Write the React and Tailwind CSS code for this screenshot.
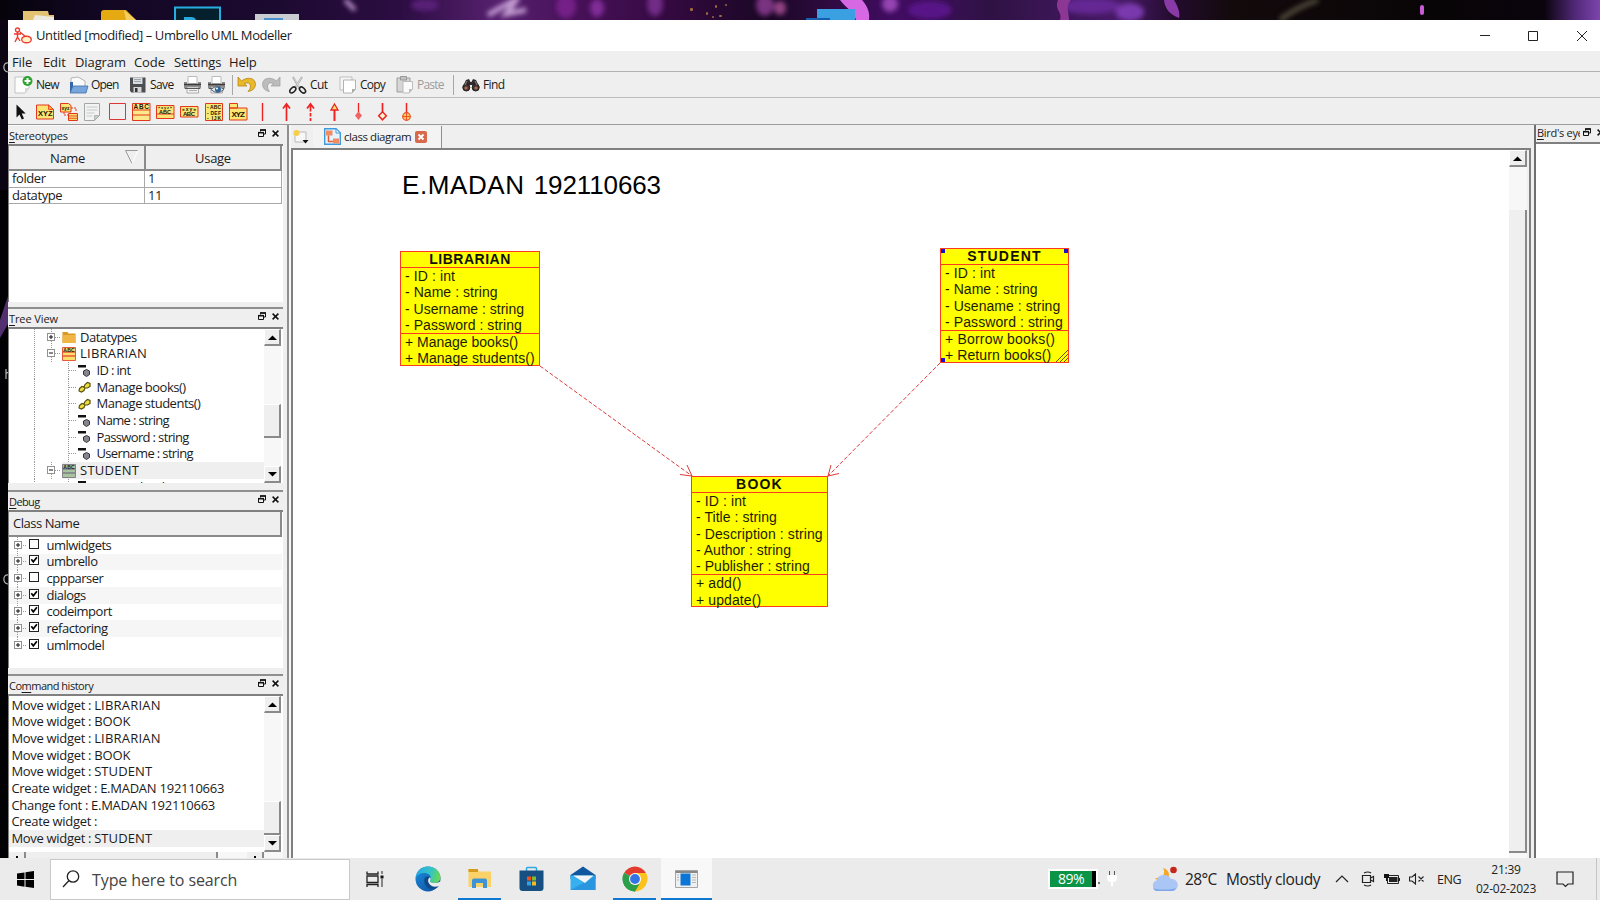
import React from "react";

/* ---------- desktop backdrop ---------- */

function Wallpaper() {
  return (
    <svg width="1600" height="20" viewBox="0 0 1600 20" className="block shrink-0">
      <defs>
        <linearGradient id="wall" x1="0" x2="1" y1="0" y2="0">
          <stop offset="0" stopColor="#06030b" />
          <stop offset="0.06" stopColor="#120722" />
          <stop offset="0.17" stopColor="#1c0a30" />
          <stop offset="0.25" stopColor="#2c0d42" />
          <stop offset="0.31" stopColor="#56206e" />
          <stop offset="0.36" stopColor="#481159" />
          <stop offset="0.42" stopColor="#33093f" />
          <stop offset="0.48" stopColor="#1a0724" />
          <stop offset="0.51" stopColor="#2a0a3a" />
          <stop offset="0.56" stopColor="#420c63" />
          <stop offset="0.62" stopColor="#2f1244" />
          <stop offset="0.7" stopColor="#491a68" />
          <stop offset="0.735" stopColor="#220b2c" />
          <stop offset="0.77" stopColor="#130a0c" />
          <stop offset="0.9" stopColor="#080506" />
          <stop offset="0.965" stopColor="#0a040d" />
          <stop offset="0.985" stopColor="#53297a" />
          <stop offset="1" stopColor="#7d45ad" />
        </linearGradient>
        <filter id="soft" filterUnits="userSpaceOnUse" x="300" y="-20" width="1100" height="60">
          <feGaussianBlur stdDeviation="2.500" />
        </filter>
      </defs>
      <rect width="1600" height="20" fill="url(#wall)" />
      <g filter="url(#soft)" opacity="0.85">
        <path d="M345 0l10 10" stroke="#e5b5f5" strokeWidth="4" />
        <path d="M488 15l30-17-12 16 20-4" stroke="#d8b5e6" strokeWidth="5" fill="none" />
        <ellipse cx="425" cy="5" rx="14" ry="6" fill="#5f217f" />
        <ellipse cx="566" cy="6" rx="10" ry="12" fill="#7d2490" />
        <ellipse cx="597" cy="8" rx="7" ry="9" fill="#8b32a4" />
        <ellipse cx="655" cy="4" rx="8" ry="12" fill="#7c3193" />
        <ellipse cx="765" cy="5" rx="9" ry="11" fill="#8a3b91" />
        <ellipse cx="780" cy="8" rx="6" ry="7" fill="#a84d96" />
        <ellipse cx="890" cy="4" rx="8" ry="8" fill="#a44fc0" />
        <ellipse cx="930" cy="10" rx="22" ry="9" fill="#5d1690" />
        <ellipse cx="1090" cy="6" rx="30" ry="8" fill="#6b2a9d" />
        <ellipse cx="1130" cy="12" rx="14" ry="9" fill="#8440bb" />
        <path d="M1280 20c10-8 20-14 38-20" stroke="#5d5745" strokeWidth="5" fill="none" />
      </g>
      <path d="M840 0h22c6 7 8 13 7 20h-13c-2-8-8-10-16-20z" fill="#d768e4" />
      <path d="M1058 0h13c-6 6-2 12-2 20h-9c3-8-6-10-2-20z" fill="#8d3795" />
      <path d="M1164 0h10c5 8 6 14 5 18-8-3-14-8-15-18z" fill="#8a3aa6" />
      <rect x="1420" y="5" width="4" height="10" rx="2" fill="#c65bd4" />
      <g fill="#b9813e" opacity="0.8">
        <rect x="690" y="8" width="3" height="3" rx="1" /><rect x="706" y="12" width="2" height="3" rx="1" />
        <rect x="715" y="5" width="2" height="3" rx="1" /><rect x="719" y="15" width="3" height="2" rx="1" />
        <rect x="712" y="16" width="2" height="2" rx="1" /><rect x="725" y="4" width="2" height="2" rx="1" />
      </g>
      <path d="M23 11h25l1 4h5v5H23z" fill="#e4c273" /><path d="M35 15l19 2v3H33z" fill="#ece9df" />
      <path d="M101 20v-7q0-3 3-3h22l10 10z" fill="#e5a912" /><path d="M124 10l12 10h-10z" fill="#f3cf62" />
      <rect x="175" y="7.500" width="45" height="14" fill="#03202c" stroke="#27aee0" strokeWidth="2" />
      <path d="M184 20v-3h7q4 0 5 3z" fill="#2aa9dc" />
      <rect x="255" y="14" width="44" height="6" fill="#c9cbd0" /><rect x="264" y="18" width="19" height="2" fill="#4a8fd0" />
      <rect x="817" y="9" width="38" height="11" fill="#3aa0e2" /><rect x="806" y="18" width="24" height="2" fill="#155fae" />
    </svg>
  );
}

function DesktopEdge() {
  return (
    <svg width="8" height="838" viewBox="0 0 8 838" className="block shrink-0 bg-[#020104]">
      <rect width="8" height="170" fill="#0b0412" />
      <path d="M8 276L0 300v18l8-14z" fill="#52306f" />
      <g fill="none" stroke="#b9b9b9" strokeWidth="1.200">
        <path d="M8 43c-5-1-6 8 0 9" />
        <path d="M6 349v10M6 354q1-2 2-1" />
        <path d="M8 555c-5-1-6 8 0 9" />
      </g>
    </svg>
  );
}

/* ---------- shared pieces ---------- */

const Icon = ({ w = 18, h = 18, className = "", children }) => (
  <svg width={w} height={h} viewBox={`0 0 ${w} ${h}`} className={`block shrink-0 ${className}`} fill="none">
    {children}
  </svg>
);

const RestoreGlyph = () => (
  <Icon w={8} h={8}>
    <path d="M2.500 2.500V1h5v4H5.500" stroke="#111" />
    <path d="M2 1h6" stroke="#111" strokeWidth="1.600" />
    <path d="M.5 3.500h5v4h-5z" stroke="#111" fill="#efefef" />
    <path d="M0 3.700h6" stroke="#111" strokeWidth="1.600" />
  </Icon>
);

const CrossGlyph = () => (
  <Icon w={7} h={7}>
    <path d="M.6.600l5.800 5.800M6.400.600L.600 6.400" stroke="#111" strokeWidth="1.500" />
  </Icon>
);

function DockTitle({ before = "", hot, rest, tracking = "tracking-[-0.35px]" }) {
  return (
    <div className="flex h-[18px] shrink-0 items-center pl-[1px]">
      <span className={`text-[11px] leading-none ${tracking}`}>
        {before}
        <span className="underline underline-offset-2">{hot}</span>
        {rest}
      </span>
      <span className="mr-[4px] mb-[4px] ml-auto flex items-center gap-[6px]">
        <RestoreGlyph />
        <CrossGlyph />
      </span>
    </div>
  );
}

function ScrollButton({ up }) {
  return (
    <div className="flex h-[17px] w-full shrink-0 items-center justify-center border-r-2 border-b-2 border-t border-l border-[#8a8a8a] border-t-white border-l-white bg-[#efefef]">
      <svg width="9" height="5" viewBox="0 0 9 5" className="block">
        <path d={up ? "M0 5L4.500 .5 9 5z" : "M0 0L4.500 4.500 9 0z"} fill="#000" />
      </svg>
    </div>
  );
}

function ScrollBar({ gap, thumb }) {
  return (
    <div className="flex w-[17px] shrink-0 flex-col bg-[#f7f7f7]">
      <ScrollButton up />
      <div className={`${gap} shrink-0`} />
      <div className={`${thumb} shrink-0 border-t border-r-2 border-b-2 border-[#8a8a8a] border-t-white bg-[#efefef]`} />
      <div className="flex-1" />
      <ScrollButton />
    </div>
  );
}

/* ---------- toolbar icons ---------- */

const NewIcon = () => (
  <Icon w={20}>
    <path d="M1 1h14v11l-4 5H1z" fill="#fdfdfd" stroke="#c3c3c3" />
    <path d="M15 12l-4 5v-5z" fill="#d8d8d8" />
    <circle cx="13.500" cy="5" r="5" fill="#2aa52f" />
    <path d="M13.500 2v6M10.500 5h6" stroke="#fff" strokeWidth="2" />
  </Icon>
);
const OpenIcon = () => (
  <Icon w={20}>
    <path d="M2 2l7-1 7 4v6H2z" fill="#fafafa" stroke="#b4b4b4" />
    <path d="M1 6h3v10H1z" fill="#3467a7" />
    <path d="M4 10h15l-2 7H1z" fill="#77a5dc" stroke="#3e6ea9" strokeWidth=".8" />
  </Icon>
);
const SaveIcon = () => (
  <Icon>
    <path d="M1 1.500h15.500v15H2.500L1 15z" fill="#4b4d50" />
    <path d="M4 1.500h9.500V8H4z" fill="#d9dde0" />
    <path d="M5 3.500h7M5 5.500h7" stroke="#9ca5ab" />
    <path d="M4.500 11h8v5.500h-8z" fill="#d5d5d5" /><path d="M6 12h2.500v4H6z" fill="#333" />
  </Icon>
);
const PrintIcon = ({ eye }) => (
  <Icon w={20}>
    <path d="M5 .5h9v7H5z" fill="#fff" stroke="#bbb" />
    <path d="M1 6h3v2h11V6h3v6.500H1z" fill="#8c8c8c" />
    <path d="M1 8.500h17" stroke="#3c3c3c" strokeWidth="1.500" />
    <path d="M4 11h11.500v6H4z" fill="#f4f4f4" stroke="#999" strokeWidth=".8" />
    <path d="M2 12.500h15" stroke="#555" />
    {eye ? (
      <>
        <path d="M4 13.500q6-6 13 0-7 6-13 0z" fill="#dbe7f2" stroke="#666" />
        <circle cx="11" cy="13.500" r="3" fill="#2f6698" /><circle cx="10" cy="12.500" r="1" fill="#fff" />
      </>
    ) : (
      <path d="M6 14.500h8" stroke="#aaa" />
    )}
  </Icon>
);
const UndoIcon = () => (
  <Icon w={20}>
    <path d="M1 1v9h9L7 7.500q6-2 6.500 2.500.3 3-2.500 5.500 7-1 7.500-7C18.500 1.500 10 .5 4.500 5z" fill="#e9b92c" stroke="#b98510" strokeWidth=".8" />
  </Icon>
);
const RedoIcon = () => (
  <Icon w={20}>
    <path d="M18 1v9H9l3-2.500q-6-2-6.500 2.500-.3 3 2 5.500-6.500-1-7-7C.5 1.500 9 .5 14.500 5z" fill="#bcbcbc" stroke="#a2a2a2" strokeWidth=".8" />
  </Icon>
);
const CutIcon = () => (
  <Icon>
    <path d="M4 1l7 12M13 1L6 12" stroke="#a9a9a9" strokeWidth="2" />
    <path d="M4.500 1.500l6 10M12.500 1.500l-6 10" stroke="#e8e8e8" strokeWidth=".7" />
    <ellipse cx="3.800" cy="14" rx="3.600" ry="2.200" transform="rotate(-45 3.800 14)" stroke="#222" strokeWidth="1.600" />
    <ellipse cx="13.500" cy="14" rx="3.600" ry="2.200" transform="rotate(45 13.500 14)" stroke="#222" strokeWidth="1.600" />
  </Icon>
);
const CopyIcon = () => (
  <Icon>
    <path d="M1 1h12v13H1z" fill="#f6f6f6" stroke="#bdbdbd" />
    <path d="M4.500 4H16.500v9l-3.500 4H4.500z" fill="#fff" stroke="#b2b2b2" /><path d="M16.500 13l-3.500 4v-4z" fill="#aaa" />
  </Icon>
);
const PasteIcon = () => (
  <Icon>
    <path d="M1 2h13v14H1z" fill="#d6d6d6" stroke="#9d9d9d" /><path d="M4.500.500h6V4h-6z" fill="#c3c3c3" stroke="#999" />
    <path d="M7 5.500h9.500V13l-3.500 4H7z" fill="#fafafa" stroke="#bcbcbc" /><path d="M16.500 13l-3.500 4v-4z" fill="#bbb" />
  </Icon>
);
const FindIcon = () => (
  <Icon>
    <path d="M4 4l3-1 1.500 3h1L11 3l3 1 3.500 7-4 4-3-2V9h-3v4l-3 2-4-4z" fill="#2f2b2b" />
    <circle cx="4.300" cy="11.500" r="3.500" fill="#453330" stroke="#222" /><circle cx="13.700" cy="11.500" r="3.500" fill="#453330" stroke="#222" />
    <circle cx="4" cy="12" r="1.600" fill="#a76f4e" /><circle cx="14" cy="12" r="1.600" fill="#a76f4e" />
    <path d="M5 5l-2 4M13 5l2 4" stroke="#888" />
  </Icon>
);

function ToolButton({ width, icon, label, labelClass = "" }) {
  return (
    <div className={`flex ${width} shrink-0 items-center`}>
      {icon}
      {label && <span className={`text-[12px] leading-none ${labelClass}`}>{label}</span>}
    </div>
  );
}

const Separator = ({ width }) => (
  <div className={`${width} h-[20px] shrink-0`}>
    <div className="h-full w-px bg-[#a8a8a8]" />
  </div>
);

const tiny = { fontFamily: "Liberation Sans, Arial, sans-serif", fontWeight: 700, fill: "#2a1200" };

function ShapeBar() {
  return (
    <div className="flex h-[26px] shrink-0 items-center pt-[2px] pl-[7px]">
      <Icon w={21} h={20}><path d="M1.500 2.500v13l3-3 2.300 5 2.200-1-2.300-5h4z" fill="#111" /></Icon>
      <Icon w={24} h={20}>
        <path d="M.5 3h12l5 4.500v9.500H.500z" fill="#fbe675" stroke="#e5371c" /><path d="M12.500 3v4.500h5z" fill="#ffad43" stroke="#e5371c" strokeWidth=".8" />
        <text x="2" y="14" fontSize="7.500" textLength="14.500" style={tiny}>XYZ</text>
      </Icon>
      <Icon w={24} h={20}>
        <path d="M.5 1.500h8l2.500 2v6.500H.500z" fill="#fbe675" stroke="#e5371c" />
        <text x="1.500" y="8" fontSize="5" textLength="8" style={tiny}>xyz</text>
        <path d="M11 6h5v4M4 10v3h4" stroke="#e5371c" strokeDasharray="2 1" />
        <path d="M8.500 11.500h9v7h-9z" fill="#fbd96b" stroke="#e5371c" /><path d="M8.500 14h9M8.500 16.300h9" stroke="#e5371c" strokeWidth=".8" />
      </Icon>
      <Icon w={24} h={20}>
        <path d="M.5 1.500h15v12l-5 5h-10z" fill="#f3f3f3" stroke="#a5a5a5" /><path d="M15.500 13.500l-5 5v-5z" fill="#c5c9cc" stroke="#a5a5a5" strokeWidth=".7" />
        <path d="M2.500 5h11M2.500 8h11M2.500 11h8M2.500 14h6" stroke="#c4c9cc" />
      </Icon>
      <Icon w={24} h={20}><path d="M1.500 1.500h16v16h-16z" stroke="#df3535" /></Icon>
      <Icon w={24} h={20}>
        <path d="M.5 1.500h17.500v17H.500z" fill="#fbe98a" stroke="#e5371c" /><path d="M.5 8h17.500M.5 13h17.500" stroke="#e5371c" />
        <text x="1.500" y="7.200" fontSize="6.500" textLength="15.500" style={tiny}>ABC</text>
      </Icon>
      <Icon w={24} h={20}>
        <path d="M.5 3.500h17.500v13H.500z" fill="#fbe675" stroke="#e5371c" /><path d="M.5 12h17.500" stroke="#e5371c" />
        <text x="2" y="7" fontSize="4" textLength="14" style={tiny}>«xyz»</text>
        <text x="3" y="11.500" fontSize="5.500" textLength="12" style={tiny}>ABC</text>
      </Icon>
      <Icon w={25} h={20}>
        <path d="M.5 4.500h17.500v10.500H.500z" fill="#fbe675" stroke="#e5371c" />
        <text x="2" y="9" fontSize="5" textLength="14" style={tiny}>«xy»</text>
        <text x="3" y="14" fontSize="6" textLength="12" style={tiny}>ABC</text>
      </Icon>
      <Icon w={24} h={20}>
        <path d="M.5 1.500h17v17H.500z" fill="#f7e873" stroke="#e5371c" />
        <text x="2" y="7" fontSize="5" textLength="14" style={tiny}>- ABC</text>
        <text x="2" y="12.500" fontSize="5" textLength="14" style={tiny}>- DEF</text>
        <text x="2" y="17.500" fontSize="5" textLength="14" style={tiny}>- IJK</text>
      </Icon>
      <Icon w={24} h={20}>
        <path d="M.5 1.500h8v4.500H.500zM.5 6h17.500v12H.500z" fill="#fbe675" stroke="#e5371c" />
        <text x="2.500" y="15" fontSize="8" textLength="13.500" style={tiny}>XYZ</text>
      </Icon>
      <Icon w={24} h={20}><path d="M9.500 1v18" stroke="#ef2222" strokeWidth="1.400" /></Icon>
      <Icon w={24} h={20}><path d="M9.500 2v17M6 6.500L9.500 2 13 6.500" stroke="#ef2222" strokeWidth="1.700" /></Icon>
      <Icon w={24} h={20}><path d="M9.500 6v13" stroke="#ef2222" strokeWidth="1.700" strokeDasharray="3.500 1.500" /><path d="M6 6.500L9.500 2 13 6.500M9.500 2v4" stroke="#ef2222" strokeWidth="1.700" /></Icon>
      <Icon w={24} h={20}><path d="M9.500 8v11" stroke="#ef2222" strokeWidth="2" /><path d="M6 8l3.500-6L13 8z" fill="#fbe675" stroke="#ef2222" strokeWidth="1.300" /></Icon>
      <Icon w={24} h={20}><path d="M9.500 1V11" stroke="#ef2222" strokeWidth="1.300" /><path d="M6 13.500l3.500-4 3.500 4-3.500 4.500z" fill="#ef6464" /></Icon>
      <Icon w={24} h={20}><path d="M9.500 1V10" stroke="#ef2222" strokeWidth="1.700" /><path d="M5.700 13.800l3.800-4 3.800 4-3.800 4z" fill="#fff6d0" stroke="#ef2222" strokeWidth="1.500" /></Icon>
      <Icon w={24} h={20}><path d="M9.500 1V15" stroke="#ef2222" strokeWidth="1.500" /><circle cx="9.500" cy="14.500" r="3.800" fill="#fbc95f" stroke="#ef4a22" strokeWidth="1.200" /><path d="M9.500 11v7M6 14.500h7" stroke="#ef4a22" strokeWidth=".9" /></Icon>
    </div>
  );
}

/* ---------- left docks ---------- */

function Stereotypes() {
  const head = "flex items-center justify-center border-r-2 border-b-2 border-[#8a8a8a] bg-[#efefef] text-[13px] pt-[2px]";
  return (
    <section className="flex h-[182px] shrink-0 flex-col border-t border-[#f8f8f8]">
      <DockTitle hot="S" rest="tereotypes" tracking="tracking-[-0.2px]" />
      <div className="flex h-[158px] flex-col border-t-2 border-l border-[#808080] bg-white">
        <div className="flex h-[25px] w-[273px] shrink-0">
          <div className={`${head} relative w-[137px] pr-[18px]`}>
            <span className="tracking-[-0.3px]">Name</span>
            <svg width="14" height="14" viewBox="0 0 14 14" className="absolute top-[4px] right-[5px]">
              <path d="M13 .500H.500l6.500 13" fill="none" stroke="#999" /><path d="M13 .500L7 13.500" fill="none" stroke="#fff" />
            </svg>
          </div>
          <div className={`${head} flex-1 tracking-[-0.3px]`}>Usage</div>
        </div>
        {[["folder", "1"], ["datatype", "11"]].map(([name, usage]) => (
          <div key={name} className="flex h-[16.5px] w-[273px] shrink-0 items-center border-b border-[#a9a9a9] text-[13px] leading-none tracking-[-0.4px]">
            <span className="flex h-full w-[136px] items-center border-r border-[#a9a9a9] pl-[3px]">{name}</span>
            <span className="flex h-full flex-1 items-center border-r border-[#a9a9a9] pl-[3px]">{usage}</span>
          </div>
        ))}
      </div>
    </section>
  );
}

const dots = { stroke: "#9a9a9a", strokeDasharray: "1 1" };

const ExpandBox = ({ x, plus }) => (
  <g>
    <rect x={x} y="4.500" width="7" height="7" fill="#fff" stroke="#929292" />
    <path d={plus ? `M${x + 1.500} 8h4M${x + 3.500} 6v4` : `M${x + 1.500} 8h4`} stroke="#111" />
  </g>
);

const ClassGlyph = ({ dim }) => (
  <Icon w={14} h={14}>
    <path d="M.5.500h13v13H.500z" fill={dim ? "#a9c29f" : "#fbdf6d"} stroke={dim ? "#86828a" : "#e6593b"} />
    <path d="M.5 5h13M.5 9h13" stroke={dim ? "#7c7f88" : "#e6593b"} strokeWidth="1.300" />
    <text x="1.200" y="4.600" fontSize="5" textLength="11.500" style={tiny}>ABC</text>
  </Icon>
);
const FolderGlyph = () => (
  <Icon w={14} h={14}><path d="M.5 2h5l1 1.500h7V13H.500z" fill="#d89a26" /><path d="M.5 5h13v8H.500z" fill="#efb545" /></Icon>
);
const AttributeGlyph = () => (
  <Icon w={13} h={14}><path d="M0 1h8v2.500H0z" fill="#111" /><path d="M8.500 5.500l3 1.500v3.500l-3 2-3-2V7z" fill="#85858f" stroke="#333" /></Icon>
);
const OperationGlyph = () => (
  <Icon w={13} h={14}>
    <path d="M1.500 8.500l2.500-2 2 .5 1-2.500L9.500 2.500l2.500 1v3L9.500 8 7 8l-1 2.500-2.500 1.500-2.500-1z" fill="#f1df3c" stroke="#57500f" strokeWidth="1.200" />
    <path d="M5.500 7l1.500 1.200" stroke="#57500f" />
  </Icon>
);

const tree = [
  { text: "Datatypes", kind: "folder", plus: true },
  { text: "LIBRARIAN", kind: "class" },
  { text: "ID : int", kind: "attr" },
  { text: "Manage books()", kind: "op" },
  { text: "Manage students()", kind: "op" },
  { text: "Name : string", kind: "attr" },
  { text: "Password : string", kind: "attr" },
  { text: "Username : string", kind: "attr" },
  { text: "STUDENT", kind: "class", dim: true },
  { text: "Borrow books()", kind: "attr" },
];

const treeTracking = {
  folder: "tracking-[-0.5px]",
  class: "tracking-[0.25px]",
  attr: "tracking-[-0.65px]",
  op: "tracking-[-0.5px]",
};

function TreeRow({ row }) {
  const top = row.kind === "folder" || row.kind === "class";
  return (
    <div className="flex h-[16.67px] shrink-0 items-center">
      <svg width={top ? 53 : 69} height="17" viewBox={`0 0 ${top ? 53 : 69} 17`} className="block shrink-0">
        <path d={top ? "M25.500 0v17M42.500 0v17M46 8.500h6" : "M25.500 0v17M59.500 0v17M60 8.500h7"} {...dots} />
        {top && <ExpandBox x={38.5} plus={row.plus} />}
      </svg>
      <div className={`flex h-full flex-1 items-center ${row.dim ? "bg-[#efefef]" : ""}`}>
        {row.kind === "folder" && <FolderGlyph />}
        {row.kind === "class" && <ClassGlyph dim={row.dim} />}
        {row.kind === "attr" && <AttributeGlyph />}
        {row.kind === "op" && <OperationGlyph />}
        <span className={`${top ? "ml-[4px]" : "ml-[5.5px]"} text-[13px] leading-none ${treeTracking[row.kind]}`}>{row.text}</span>
      </div>
    </div>
  );
}

function TreeView() {
  return (
    <section className="flex h-[183px] shrink-0 flex-col border-t-2 border-[#8f8f8f]">
      <DockTitle hot="T" rest="ree View" tracking="tracking-[-0.1px]" />
      <div className="flex h-[156px] overflow-hidden border-t-2 border-l border-[#808080] bg-white">
        <div className="flex flex-1 flex-col">
          {tree.map((row) => <TreeRow key={row.text} row={row} />)}
        </div>
        <ScrollBar gap="h-[58px]" thumb="h-[34px]" />
        <div className="w-[2px] bg-white" />
      </div>
    </section>
  );
}

const modules = [
  ["umlwidgets", false], ["umbrello", true], ["cppparser", false], ["dialogs", true],
  ["codeimport", true], ["refactoring", true], ["umlmodel", true],
];

function DebugDock() {
  return (
    <section className="flex h-[184px] shrink-0 flex-col border-t-2 border-[#8f8f8f]">
      <DockTitle hot="D" rest="ebug" tracking="tracking-[-0.6px]" />
      <div className="flex h-[158px] flex-col border-t-2 border-l border-[#808080] bg-white">
        <div className="flex h-[25px] w-[273px] shrink-0 items-center border-r-2 border-b-2 border-[#8a8a8a] bg-[#efefef] pt-px pl-[4px] text-[13px] tracking-[-0.45px]">
          Class Name
        </div>
        {modules.map(([name, on], i) => (
          <div key={name} className={`flex h-[16.67px] w-[273px] shrink-0 items-center ${i % 2 ? "bg-[#f6f6f6]" : ""}`}>
            <svg width="20" height="17" viewBox="0 0 20 17" className="block">
              <path d={i === 6 ? "M8.500 0v8M12 8.500h6" : "M8.500 0v17M12 8.500h6"} fill="none" {...dots} />
              <ExpandBox x={5.5} plus />
            </svg>
            <svg width="10" height="10" viewBox="0 0 10 10" className="mb-[3px] block">
              <rect x=".5" y=".5" width="9" height="9" fill="#fff" stroke="#222" />
              {on && <path d="M2.300 4.300l2 2.500 3.600-4.600" fill="none" stroke="#000" strokeWidth="1.700" />}
            </svg>
            <span className="ml-[7.5px] text-[13px] leading-none tracking-[-0.5px]">{name}</span>
          </div>
        ))}
      </div>
    </section>
  );
}

const mixed = "tracking-[-0.1px]";
const history = [
  ["LIBRARIAN", "tracking-[0.2px]"], ["BOOK", mixed], ["LIBRARIAN", "tracking-[0.2px]"], ["BOOK", mixed], ["STUDENT", "tracking-[0.1px]"],
  ["E.MADAN 192110663", "tracking-[-0.25px]", "Create"], ["E.MADAN 192110663", "tracking-[-0.25px]", "Change font :"], ["", mixed, "Create"], ["STUDENT", "tracking-[0.1px]"],
];

function HistoryDock() {
  return (
    <section className="flex h-[184px] shrink-0 flex-col border-t-2 border-[#8f8f8f]">
      <DockTitle before="Co" hot="m" rest="mand history" tracking="tracking-[-0.5px]" />
      <div className="flex h-[164px] flex-col border-t-2 border-l border-[#808080] bg-white">
        <div className="flex h-[156px] shrink-0">
          <div className="flex flex-1 flex-col pt-px">
            {history.map(([target, tracking, verb = "Move"], i) => (
              <div key={i} className={`flex h-[16.67px] shrink-0 items-center gap-[3px] pl-[2.5px] text-[13px] leading-none ${i === 8 ? "bg-[#efefef]" : ""}`}>
                <span className="tracking-[-0.32px]">{verb.endsWith(":") ? verb : `${verb} widget :`}</span>
                <span className={tracking}>{target}</span>
              </div>
            ))}
          </div>
          <ScrollBar gap="h-[88px]" thumb="h-[34px]" />
          <div className="w-[2px] bg-white" />
        </div>
        <div className="flex h-[6px] bg-[#f7f7f7]">
          <div className="flex w-[17px] justify-center border-r-2 border-[#8a8a8a] bg-[#efefef]"><div className="mt-[4px] h-[2px] w-[2px] bg-black" /></div>
          <div className="w-[192px] border-r-2 border-[#8a8a8a] bg-[#efefef]" />
          <div className="flex-1" />
          <div className="mr-[19px] flex w-[17px] justify-center border-r-2 border-[#8a8a8a] bg-[#efefef]"><div className="mt-[4px] h-[2px] w-[2px] bg-black" /></div>
        </div>
      </div>
    </section>
  );
}

/* ---------- diagram ---------- */

function ClassNode({ place, name, nameClass, fields, methods, children }) {
  return (
    <div className={`absolute border border-[#ff3b1f] bg-[#ffff00] font-['Liberation_Sans',Arial,sans-serif] text-[14px] text-[#1c1c00] ${place}`}>
      <div className="flex h-[16px] items-center justify-center border-b border-[#ff3b1f] pb-[2px] text-[14px] leading-none font-bold text-[#111100]">
        <span className={nameClass}>{name}</span>
      </div>
      <div className="border-b border-[#ff3b1f] pl-[4px]">
        {fields.map(([text, cls]) => (
          <div key={text} className="flex h-[16.25px] items-center leading-none"><span className={cls}>{text}</span></div>
        ))}
      </div>
      <div className="pl-[4px]">
        {methods.map(([text, cls]) => (
          <div key={text} className="flex h-[16.25px] items-center leading-none"><span className={cls}>{text}</span></div>
        ))}
      </div>
      {children}
    </div>
  );
}

function Canvas() {
  return (
    <div className="relative flex-1 overflow-hidden bg-white">
      <div className="absolute top-[20px] left-[109px] flex gap-[9px] font-['Liberation_Sans',Arial,sans-serif] text-[26px] leading-[30px] text-black">
        <span className="tracking-[0.6px]">E.MADAN</span>
        <span className="tracking-[-0.1px]">192110663</span>
      </div>
      <ClassNode
        place="top-[101px] left-[107px] h-[115px] w-[140px]"
        name="LIBRARIAN" nameClass="tracking-[0.5px]"
        fields={[["- ID : int", "tracking-[0.1px]"], ["- Name : string", "tracking-[0.05px]"], ["- Username : string", ""], ["- Password : string", "tracking-[0.05px]"]]}
        methods={[["+ Manage books()", ""], ["+ Manage students()", "tracking-[0.05px]"]]}
      />
      <ClassNode
        place="top-[98px] left-[647px] h-[115px] w-[129px]"
        name="STUDENT" nameClass="tracking-[1.2px]"
        fields={[["- ID : int", "tracking-[0.1px]"], ["- Name : string", "tracking-[0.05px]"], ["- Usename : string", "tracking-[0.05px]"], ["- Password : string", "tracking-[0.1px]"]]}
        methods={[["+ Borrow books()", "tracking-[0.2px]"], ["+ Return books()", "tracking-[0.1px]"]]}
      >
        <div className="absolute top-0 left-0 h-[4px] w-[4px] bg-[#1a10c8]" />
        <div className="absolute top-0 right-0 h-[4px] w-[4px] bg-[#1a10c8]" />
        <div className="absolute bottom-0 left-0 h-[4px] w-[4px] bg-[#1a10c8]" />
        <svg width="12" height="12" viewBox="0 0 12 12" className="absolute right-0 bottom-0">
          <path d="M0 12L12 0M4 12l8-8M8 12l4-4" stroke="#5c5500" />
        </svg>
      </ClassNode>
      <ClassNode
        place="top-[326px] left-[398px] h-[131px] w-[137px]"
        name="BOOK" nameClass="tracking-[1.2px]"
        fields={[["- ID : int", "tracking-[0.1px]"], ["- Title : string", "tracking-[0.05px]"], ["- Description : string", "tracking-[0.1px]"], ["- Author : string", ""], ["- Publisher : string", "tracking-[0.05px]"]]}
        methods={[["+ add()", "tracking-[0.1px]"], ["+ update()", "tracking-[0.1px]"]]}
      />
      <svg width="600" height="130" viewBox="0 0 600 130" className="absolute top-[210px] left-[240px]" fill="none" stroke="#dd3a3a">
        <path d="M7 6L159 116M407 3L295 116" strokeDasharray="4 2" />
        <path d="M147 114.500l12 1.500-5-11M298 105l-3 11 11-2.500" />
      </svg>
    </div>
  );
}

function Center() {
  return (
    <div className="flex w-[1240px] shrink-0 flex-col">
      <div className="flex h-[23px] shrink-0 items-center pl-[2px]">
        <Icon w={17} h={16}>
          <path d="M2 3h11v10H2z" fill="#f7f7f7" stroke="#b9b9b9" /><circle cx="3.500" cy="4" r="3" fill="#f5cf4a" />
          <path d="M9.500 11h6l-3 3.500z" fill="#111" />
        </Icon>
        <div className="ml-[3px] flex h-[22px] w-[129px] items-center border-r border-[#8f8f8f] bg-[#f3f3f3] pl-[11px]">
          <Icon w={17} h={17}>
            <path d="M.7.700H12l4.300 4.300v11.300H.700z" fill="#e6f3ff" stroke="#3d99de" strokeWidth="1.400" />
            <path d="M12 .700v4.300h4.300z" fill="#fff" stroke="#3d99de" />
            <path d="M2 2.500h6.500v5H2zM9 10.500h6v5H9z" fill="#f08b62" /><path d="M4.500 7.500v6H9" stroke="#e15d35" strokeWidth="1.500" />
          </Icon>
          <span className="ml-[3px] w-[66px] text-[11.5px] tracking-[-0.45px]">class diagram</span>
          <Icon w={12} h={12} className="ml-[5px]">
            <rect width="12" height="12" rx="2" fill="#d9694d" /><path d="M3.500 3.500l5 5M8.500 3.500l-5 5" stroke="#fff" strokeWidth="1.900" />
          </Icon>
        </div>
      </div>
      <div className="flex h-[710px] border-t-2 border-r-2 border-l-2 border-[#808080] bg-white">
        <Canvas />
        <div className="flex w-[18px] shrink-0 flex-col bg-[#f7f7f7]">
          <ScrollButton up />
          <div className="h-[43px]" />
          <div className="h-[643px] border-r-2 border-b-2 border-[#8a8a8a] bg-[#efefef]" />
        </div>
        <div className="w-[2px] bg-[#efefef]" />
      </div>
    </div>
  );
}

function BirdsEye() {
  return (
    <div className="flex flex-1 flex-col overflow-hidden border-l-2 border-[#6f6f6f]">
      <div className="flex h-[17px] shrink-0 items-center pl-[1px]">
        <span className="w-[43px] shrink-0 overflow-hidden text-[11px] tracking-[-0.3px]">
          <span className="underline underline-offset-2">B</span>ird's eye view
        </span>
        <span className="mb-[3px] ml-[3px] flex shrink-0 items-center gap-[6px]"><RestoreGlyph /><CrossGlyph /></span>
      </div>
      <div className="flex-1 border-t-2 border-[#808080] bg-white" />
    </div>
  );
}

/* ---------- main window ---------- */

function MainWindow() {
  return (
    <div className="flex w-[1592px] flex-col bg-[#efefef] text-[#1b1b1b]">
      <div className="flex h-[31px] shrink-0 items-center bg-white pl-[6px]">
        <Icon w={18} h={18}>
          <g stroke="#ee3b2f" strokeWidth="1.400">
            <circle cx="3.500" cy="3" r="2" /><path d="M3.500 5v5L1 15M3.500 10L6 14M0 7h7M6 5l6 5" />
            <ellipse cx="12.500" cy="12.500" rx="4.800" ry="3.300" fill="#fff3c9" />
          </g>
        </Icon>
        <span className="ml-[4px] text-[13px] tracking-[-0.4px]">Untitled [modified] – Umbrello UML Modeller</span>
        <svg width="108" height="12" viewBox="0 0 108 12" className="mr-[12px] ml-auto block" fill="none" stroke="#222">
          <path d="M0 5.500h10M48.500 1.500h9v9h-9zM97 1l10 10M107 1L97 11" />
        </svg>
      </div>
      <nav className="flex h-[21px] shrink-0 items-center border-b border-[#b3b3b3] pt-[2px] pl-[4px] text-[13px] leading-none tracking-[-0.1px]">
        <span className="w-[31px]">File</span>
        <span className="w-[32px]">Edit</span>
        <span className="w-[59px]">Diagram</span>
        <span className="w-[40px]">Code</span>
        <span className="w-[55px]">Settings</span>
        <span>Help</span>
      </nav>
      <div className="flex h-[26px] shrink-0 items-center border-b border-[#bdbdbd] pt-px pl-[6px]">
        <ToolButton width="w-[55px]" icon={<NewIcon />} label="New" labelClass="ml-[2px] tracking-[-0.8px]" />
        <ToolButton width="w-[60px]" icon={<OpenIcon />} label="Open" labelClass="ml-[2px] tracking-[-0.8px]" />
        <ToolButton width="w-[54px]" icon={<SaveIcon />} label="Save" labelClass="ml-[3px] tracking-[-0.6px]" />
        <ToolButton width="w-[24px]" icon={<PrintIcon />} />
        <ToolButton width="w-[25px]" icon={<PrintIcon eye />} />
        <Separator width="w-[5px]" />
        <ToolButton width="w-[25px]" icon={<UndoIcon />} />
        <ToolButton width="w-[27px]" icon={<RedoIcon />} />
        <ToolButton width="w-[50px]" icon={<CutIcon />} label="Cut" labelClass="ml-[3px] tracking-[-0.6px]" />
        <ToolButton width="w-[57px]" icon={<CopyIcon />} label="Copy" labelClass="ml-[3px] tracking-[-0.8px]" />
        <ToolButton width="w-[57px]" icon={<PasteIcon />} label="Paste" labelClass="ml-[3px] tracking-[-0.8px] text-[#9c9c9c]" />
        <Separator width="w-[9px]" />
        <ToolButton width="w-[50px]" icon={<FindIcon />} label="Find" labelClass="ml-[3px] tracking-[-0.6px]" />
      </div>
      <ShapeBar />
      <div className="flex h-[734px] shrink-0 border-t border-[#9b9b9b]">
        <div className="flex w-[275px] shrink-0 flex-col">
          <Stereotypes />
          <TreeView />
          <DebugDock />
          <HistoryDock />
        </div>
        <div className="ml-[4px] w-[4px] shrink-0 border-l-2 border-[#8f8f8f] bg-[#f6f6f6]" />
        <Center />
        <div className="w-[3px] shrink-0" />
        <BirdsEye />
      </div>
    </div>
  );
}

/* ---------- taskbar ---------- */

const TaskButton = ({ width, running, active, children }) => (
  <div className={`flex h-[42px] ${width} shrink-0 flex-col items-center ${active ? "bg-[#f8f8f8]" : ""}`}>
    <div className="flex flex-1 items-center pt-px">{children}</div>
    <div className={`h-[2px] ${active ? "w-full" : "w-[43px]"} ${running ? "bg-[#0f78d0]" : ""}`} />
  </div>
);

function Taskbar() {
  return (
    <footer className="flex h-[42px] shrink-0 items-center bg-[#ebebeb] text-[#222]">
      <div className="flex w-[50px] shrink-0 justify-center">
        <Icon w={17} h={17}><path d="M0 2.500L7.500 1.400v6.700H0zM8.500 1.200L17 0v8.100H8.500zM0 9h7.500v6.700L0 14.600zM8.500 9H17v8l-8.500-1.200z" fill="#000" /></Icon>
      </div>
      <div className="flex h-[41px] w-[300px] shrink-0 items-center border border-[#c9c9c9] bg-white pl-[11px]">
        <Icon w={18} h={18}><circle cx="11" cy="6.500" r="5.700" stroke="#222" strokeWidth="1.300" /><path d="M7 10.500L1 17" stroke="#222" strokeWidth="1.300" /></Icon>
        <span className="ml-[12px] pt-px text-[16px] tracking-[-0.1px] text-[#444]">Type here to search</span>
      </div>
      <TaskButton width="w-[50px]">
        <Icon w={18} h={18}>
          <path d="M1 1.500v2.500h11V1.500M1 17v-2.500h11V17M1 6h11v6.500H1z" stroke="#222" strokeWidth="1.300" /><path d="M16 1v3M16 9v8" stroke="#222" /><path d="M14.500 5.500h3v3h-3z" fill="#111" />
        </Icon>
      </TaskButton>
      <TaskButton width="w-[55px]">
        <svg width="26" height="26" viewBox="0 0 26 26" className="block">
          <defs>
            <linearGradient id="edgeTop" x1="0" x2="1" y1="0.300" y2="0.500"><stop offset="0" stopColor="#27a6e5" /><stop offset=".6" stopColor="#35c5c3" /><stop offset="1" stopColor="#6bd84c" /></linearGradient>
            <linearGradient id="edgeBody" x1="0" x2="1" y1="0" y2="1"><stop offset="0" stopColor="#1c8fdc" /><stop offset="1" stopColor="#0c4a9c" /></linearGradient>
          </defs>
          <circle cx="13" cy="13" r="12.500" fill="url(#edgeBody)" />
          <path d="M.6 12C1.500 4 7 .5 13 .5c7.500 0 12.500 5.500 12.500 10.500 0 4-3 6-6.500 6-3 0-4.500-1.200-4-2.500.6-1 .8-1.500.8-2.700C15.800 8.500 12 7 9 7 5 7 2 9 .6 12z" fill="url(#edgeTop)" />
          <path d="M9.500 12.500c-1.500 6 3 11 9 10.500 2.500-.3 4-1.500 5.500-3-4 1.800-9 .5-10.500-4-.5-1.800 0-3.500 1.500-4.700-2-1.500-4.800-.8-5.500 1.200z" fill="#114a8b" />
          <path d="M15 11.200c-1.700 1-2.200 3-1.700 4.800 1.500 4.500 6.500 5.800 10.700 4l1.700-3v-2c-1.500 1.500-3.700 2-6.700 2-3 0-4.500-1.200-4-2.500.7-1.200 1-2 0-3.300z" fill="#ebebeb" />
        </svg>
      </TaskButton>
      <TaskButton width="w-[49px]" running>
        <Icon w={24} h={21}>
          <path d="M.5 1h9l1.500 2.500h12V19H.500z" fill="#fbd268" /><path d="M.5 1h9.500v3H.500z" fill="#d59b1c" />
          <path d="M4 20v-7.500q0-2 2-2h11q2 0 2 2V20h-4v-5H8v5z" fill="#3d93d6" />
        </Icon>
      </TaskButton>
      <TaskButton width="w-[54px]">
        <Icon w={25} h={26}>
          <path d="M7.500 5V2.500q0-1 1-1h8q1 0 1 1V5" stroke="#30a7e0" strokeWidth="1.500" />
          <path d="M.5 4.500h24V22q0 3-3 3h-18q-3 0-3-3z" fill="#174f82" />
          <path d="M8 10.500h4v4H8z" fill="#f05123" /><path d="M13 10.500h4v4h-4z" fill="#80bb28" /><path d="M8 15.500h4v4H8z" fill="#2ea3e6" /><path d="M13 15.500h4v4h-4z" fill="#fcba14" />
        </Icon>
      </TaskButton>
      <TaskButton width="w-[50px]">
        <Icon w={26} h={25}>
          <path d="M.5 9L13 .5 25.500 9v4H.500z" fill="#11579f" />
          <path d="M.5 9.500h25V24H.500z" fill="#37b0ef" /><path d="M.5 24L15 16l10.500-6.500V24z" fill="#2a96e0" />
          <path d="M3 9.500h20.500L15 17z" fill="#f4f4f4" />
        </Icon>
      </TaskButton>
      <TaskButton width="w-[53px]" running>
        <svg width="26" height="26" viewBox="0 0 26 26" className="block">
          <path d="M13 13L2.200 6.800A12.500 12.500 0 0 1 23.800 6.800z" fill="#e33b2e" />
          <path d="M13 13L23.800 6.800A12.500 12.500 0 0 1 13 25.500z" fill="#fcc31e" />
          <path d="M13 13v12.500A12.500 12.500 0 0 1 2.200 6.800z" fill="#2d9f48" />
          <path d="M13 7h10.900a12.500 12.500 0 0 1 1.600 6L13 25.500l5-9z" fill="#fcc31e" />
          <path d="M2.200 6.800l5.500 9.500L13 19l4.500-1L13 25.500A12.500 12.500 0 0 1 2.200 6.800z" fill="#2d9f48" />
          <circle cx="13" cy="13" r="6" fill="#fff" /><circle cx="13" cy="13" r="4.900" fill="#3373e3" />
        </svg>
      </TaskButton>
      <TaskButton width="w-[51px]" running active>
        <Icon w={23} h={18}>
          <path d="M.5.500h22v17H.500z" fill="#f0f0f0" stroke="#a5a5a5" /><path d="M.5 2h22" stroke="#888" strokeWidth="2" />
          <path d="M5.500 3.500h10v12h-10z" fill="#0b76d6" /><path d="M17 5h4M17 7.500h4M17 10h4M17 12.500h4M2 5h2M2 7.500h2M2 10h2" stroke="#b7b7b7" />
        </Icon>
      </TaskButton>

      <div className="ml-[336px] flex h-[20px] w-[50px] shrink-0 items-center border-2 border-white bg-[#0c9446]">
        <span className="flex-1 pl-[8px] text-[14px] leading-none tracking-[-0.5px] text-white">89%</span>
        <span className="h-full w-[4px] bg-black" />
      </div>
      <div className="mt-[8px] h-[2px] w-[2px] shrink-0 bg-[#777]" />
      <Icon w={10} h={16} className="ml-[7px]"><path d="M2.500 0v5M7.500 0v5" stroke="#555" /><path d="M0 4h10v3q0 4-4 4v4H4v-4Q0 11 0 7z" fill="#fff" /></Icon>
      <Icon w={27} h={26} className="ml-[34px]">
        <path d="M12 2c3 5 0 11-8 10 5 6 14 3 14-3 0-3-2-6-6-7z" fill="#f4a82b" />
        <path d="M6 25a5.500 5.500 0 0 1-.5-10.500A8 8 0 0 1 20 13a6 6 0 0 1 1.500 12z" fill="#a9c6f5" /><path d="M2 22c4 2 18 2 23 0-1 2-2 3-4 3H6c-2 0-3-1-4-3z" fill="#7fa7ea" />
        <circle cx="22.500" cy="4" r="3.300" fill="#c4281c" />
      </Icon>
      <span className="ml-[7px] w-[41px] shrink-0 pt-[2px] text-[15.5px] leading-none tracking-[-0.6px]">28°C</span>
      <span className="w-[109px] shrink-0 pt-[2px] text-[15.5px] leading-none tracking-[-0.4px]">Mostly cloudy</span>
      <Icon w={14} h={8}><path d="M1 7l6-6 6 6" stroke="#222" strokeWidth="1.200" /></Icon>
      <Icon w={14} h={16} className="ml-[12px]"><path d="M1.500 4.500h8v7h-8zM9.500 7l3-1.500v5L9.500 9M3 2q4-2 7 0M3 14q4 2 7 0" stroke="#222" strokeWidth="1.200" /></Icon>
      <Icon w={17} h={12} className="ml-[9px]"><path d="M3.500 2.500h11v8h-11z" stroke="#222" /><path d="M5 4h8.500v5H5z" fill="#222" /><path d="M15.500 5v3" stroke="#222" /><path d="M0 1h5v4H3v3H2V5H0z" fill="#111" /></Icon>
      <Icon w={16} h={12} className="ml-[8px]"><path d="M.5 4h2.500L6.500 1v10L3 8H.500zM9.500 3.500l5 5M14.500 3.500l-5 5" stroke="#222" strokeWidth="1.100" /></Icon>
      <span className="ml-[12px] w-[36px] shrink-0 pt-[2px] text-[12.5px] leading-none tracking-[-0.4px]">ENG</span>
      <div className="flex w-[66px] shrink-0 flex-col items-center gap-[7px] text-[12px] leading-[12px] tracking-[-0.25px]">
        <span>21:39</span>
        <span>02-02-2023</span>
      </div>
      <Icon w={18} h={17} className="ml-[17px]"><path d="M1 1h16v12h-5l-2.500 2.500L7 13H1z" stroke="#222" strokeWidth="1.200" /></Icon>
      <div className="mr-[3px] ml-auto h-full w-px bg-[#c5c5c5]" />
    </footer>
  );
}

export default function App() {
  return (
    <div className="flex h-[900px] w-[1600px] flex-col overflow-hidden bg-black font-['Open_Sans','Noto_Sans',sans-serif] whitespace-nowrap">
      <Wallpaper />
      <div className="flex h-[838px] shrink-0 overflow-hidden">
        <DesktopEdge />
        <MainWindow />
      </div>
      <Taskbar />
    </div>
  );
}
